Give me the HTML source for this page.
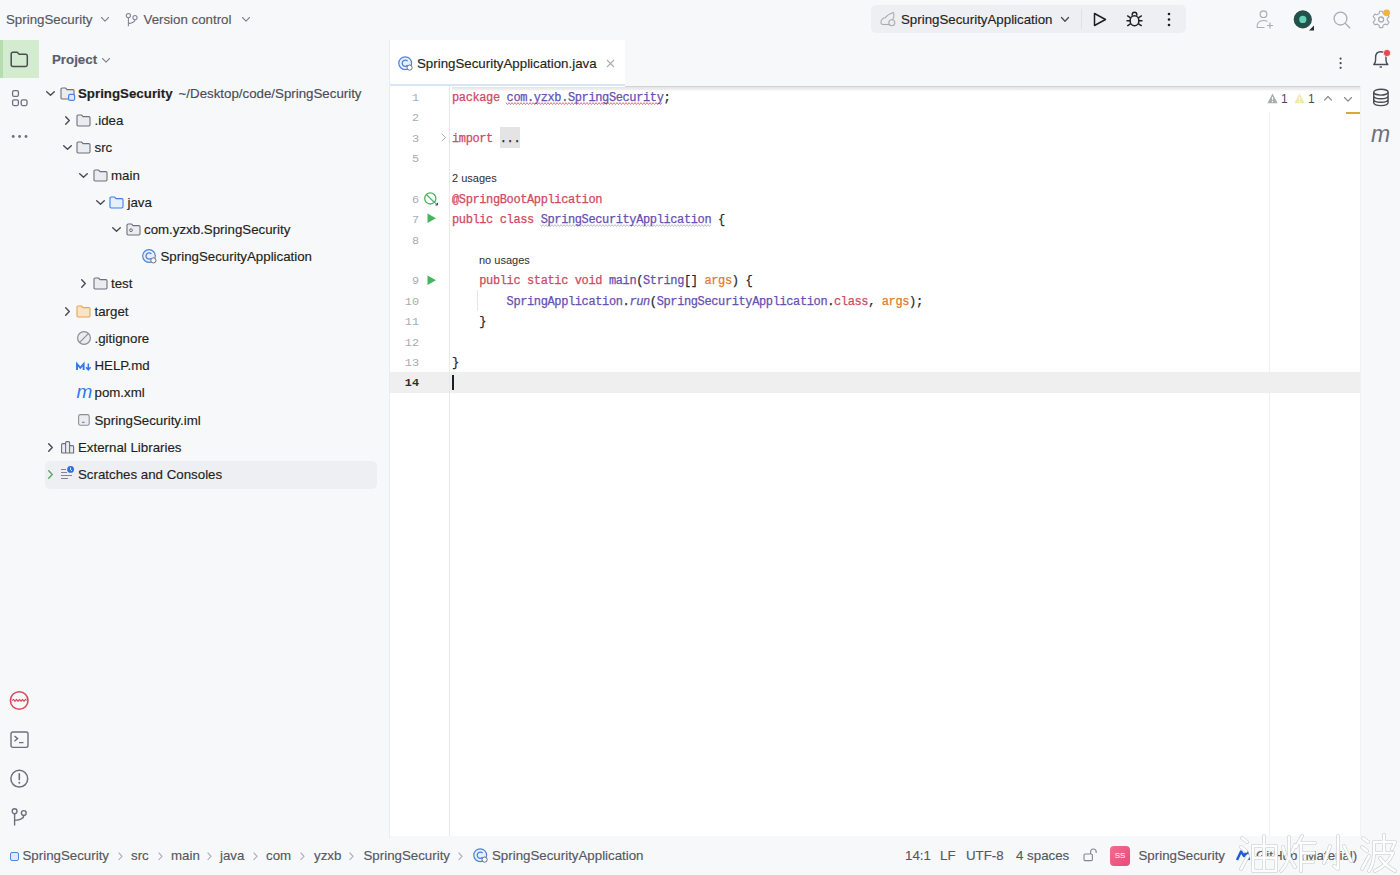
<!DOCTYPE html>
<html><head><meta charset="utf-8">
<style>
*{margin:0;padding:0;box-sizing:border-box}
html,body{width:1400px;height:875px;overflow:hidden;background:#F7F8FA;font-family:"Liberation Sans",sans-serif;color:#1E1F22}
.a{position:absolute}
.t{position:absolute;white-space:nowrap;font-size:13.3px;line-height:16px;color:#1E1F22;-webkit-text-stroke:0.15px currentColor}
svg{position:absolute;overflow:visible}
.ln{position:absolute;left:390px;width:29px;text-align:right;font-family:"Liberation Mono",monospace;font-size:11.8px;margin-top:-1.5px;color:#A8ABB0;line-height:16px}
.cl{position:absolute;left:452px;font-family:"Liberation Mono",monospace;font-size:12px;letter-spacing:-0.38px;color:#24292E;line-height:16px;white-space:pre;-webkit-text-stroke:0.25px currentColor}
.k{color:#CF4A62}.c{color:#6650B2}.o{color:#E07A2C}
.hint{position:absolute;font-size:11px;color:#2B2D30;line-height:14px;white-space:nowrap}
.sb{position:absolute;top:848px;font-size:13px;line-height:16px;color:#494B57;white-space:nowrap}
</style></head><body>
<div class="a" style="left:390px;top:86px;width:970px;height:750px;background:#fff"></div>
<div class="a" style="left:390px;top:40px;width:235px;height:46px;background:#fff"></div>
<div class="a" style="left:625px;top:86px;width:735px;height:1px;background:#D2D3D6"></div>
<div class="a" style="left:390px;top:84px;width:235px;height:2px;background:#D6E6F7"></div>
<div class="a" style="left:389px;top:40px;width:1px;height:798px;background:#EBECF0"></div>
<div class="a" style="left:1360px;top:86px;width:1px;height:750px;background:#F0F1F3"></div>
<div class="a" style="left:390px;top:372px;width:970px;height:21px;background:#EFEFEF"></div>
<div class="a" style="left:449px;top:86px;width:1px;height:750px;background:#E8E9EB"></div>
<div class="a" style="left:1269px;top:112px;width:1px;height:724px;background:#EEEFF1"></div>
<div class="a" style="left:452px;top:87px;width:908px;height:4px;background:linear-gradient(#E4E4E4,#F0F0F0 65%,#FFFFFF)"></div>
<svg style="left:506px;top:102.3px" width="159" height="4"><polyline points="0.00 0.6 1.50 2.6 3.00 0.6 4.50 2.6 6.00 0.6 7.50 2.6 9.00 0.6 10.50 2.6 12.00 0.6 13.50 2.6 15.00 0.6 16.50 2.6 18.00 0.6 19.50 2.6 21.00 0.6 22.50 2.6 24.00 0.6 25.50 2.6 27.00 0.6 28.50 2.6 30.00 0.6 31.50 2.6 33.00 0.6 34.50 2.6 36.00 0.6 37.50 2.6 39.00 0.6 40.50 2.6 42.00 0.6 43.50 2.6 45.00 0.6 46.50 2.6 48.00 0.6 49.50 2.6 51.00 0.6 52.50 2.6 54.00 0.6 55.50 2.6 57.00 0.6 58.50 2.6 60.00 0.6 61.50 2.6 63.00 0.6 64.50 2.6 66.00 0.6 67.50 2.6 69.00 0.6 70.50 2.6 72.00 0.6 73.50 2.6 75.00 0.6 76.50 2.6 78.00 0.6 79.50 2.6 81.00 0.6 82.50 2.6 84.00 0.6 85.50 2.6 87.00 0.6 88.50 2.6 90.00 0.6 91.50 2.6 93.00 0.6 94.50 2.6 96.00 0.6 97.50 2.6 99.00 0.6 100.50 2.6 102.00 0.6 103.50 2.6 105.00 0.6 106.50 2.6 108.00 0.6 109.50 2.6 111.00 0.6 112.50 2.6 114.00 0.6 115.50 2.6 117.00 0.6 118.50 2.6 120.00 0.6 121.50 2.6 123.00 0.6 124.50 2.6 126.00 0.6 127.50 2.6 129.00 0.6 130.50 2.6 132.00 0.6 133.50 2.6 135.00 0.6 136.50 2.6 138.00 0.6 139.50 2.6 141.00 0.6 142.50 2.6 144.00 0.6 145.50 2.6 147.00 0.6 148.50 2.6 150.00 0.6 151.50 2.6 153.00 0.6 154.50 2.6 156.00 0.6" fill="none" stroke="#D36A76" stroke-width="0.9"/></svg>
<svg style="left:540px;top:224.2px" width="173" height="4"><polyline points="0.00 0.6 1.50 2.6 3.00 0.6 4.50 2.6 6.00 0.6 7.50 2.6 9.00 0.6 10.50 2.6 12.00 0.6 13.50 2.6 15.00 0.6 16.50 2.6 18.00 0.6 19.50 2.6 21.00 0.6 22.50 2.6 24.00 0.6 25.50 2.6 27.00 0.6 28.50 2.6 30.00 0.6 31.50 2.6 33.00 0.6 34.50 2.6 36.00 0.6 37.50 2.6 39.00 0.6 40.50 2.6 42.00 0.6 43.50 2.6 45.00 0.6 46.50 2.6 48.00 0.6 49.50 2.6 51.00 0.6 52.50 2.6 54.00 0.6 55.50 2.6 57.00 0.6 58.50 2.6 60.00 0.6 61.50 2.6 63.00 0.6 64.50 2.6 66.00 0.6 67.50 2.6 69.00 0.6 70.50 2.6 72.00 0.6 73.50 2.6 75.00 0.6 76.50 2.6 78.00 0.6 79.50 2.6 81.00 0.6 82.50 2.6 84.00 0.6 85.50 2.6 87.00 0.6 88.50 2.6 90.00 0.6 91.50 2.6 93.00 0.6 94.50 2.6 96.00 0.6 97.50 2.6 99.00 0.6 100.50 2.6 102.00 0.6 103.50 2.6 105.00 0.6 106.50 2.6 108.00 0.6 109.50 2.6 111.00 0.6 112.50 2.6 114.00 0.6 115.50 2.6 117.00 0.6 118.50 2.6 120.00 0.6 121.50 2.6 123.00 0.6 124.50 2.6 126.00 0.6 127.50 2.6 129.00 0.6 130.50 2.6 132.00 0.6 133.50 2.6 135.00 0.6 136.50 2.6 138.00 0.6 139.50 2.6 141.00 0.6 142.50 2.6 144.00 0.6 145.50 2.6 147.00 0.6 148.50 2.6 150.00 0.6 151.50 2.6 153.00 0.6 154.50 2.6 156.00 0.6 157.50 2.6 159.00 0.6 160.50 2.6 162.00 0.6 163.50 2.6 165.00 0.6 166.50 2.6 168.00 0.6 169.50 2.6 171.00 0.6" fill="none" stroke="#B8BABE" stroke-width="0.9"/></svg>
<div class="a" style="left:500px;top:127px;width:20px;height:21px;background:#E4E4E4"></div>
<div class="ln" style="top:91px">1</div>
<div class="ln" style="top:111px">2</div>
<div class="ln" style="top:132px">3</div>
<div class="ln" style="top:152px">5</div>
<div class="ln" style="top:193px">6</div>
<div class="ln" style="top:213px">7</div>
<div class="ln" style="top:234px">8</div>
<div class="ln" style="top:274px">9</div>
<div class="ln" style="top:295px">10</div>
<div class="ln" style="top:315px">11</div>
<div class="ln" style="top:336px">12</div>
<div class="ln" style="top:356px">13</div>
<div class="ln" style="top:376px;color:#2B2D30;font-weight:bold">14</div>
<div class="cl" style="top:90px"><span class="k">package</span> <span class="c">com.yzxb.SpringSecurity</span>;</div>
<div class="cl" style="top:131px"><span class="k">import</span> ...</div>
<div class="hint" style="left:452px;top:171px">2 usages</div>
<div class="cl" style="top:192px"><span class="k">@SpringBootApplication</span></div>
<div class="cl" style="top:212px"><span class="k">public class</span> <span class="c">SpringSecurityApplication</span> {</div>
<div class="hint" style="left:479px;top:253px">no usages</div>
<div class="cl" style="top:273px">    <span class="k">public static void</span> <span class="c">main</span>(<span class="c">String</span>[] <span class="o">args</span>) {</div>
<div class="cl" style="top:294px">        <span class="c">SpringApplication</span>.<i class="c">run</i>(<span class="c">SpringSecurityApplication</span>.<span class="k">class</span>, <span class="o">args</span>);</div>
<div class="cl" style="top:314px">    }</div>
<div class="cl" style="top:355px">}</div>
<div class="a" style="left:452px;top:375px;width:2px;height:15px;background:#1E1F22"></div>
<div class="t" style="left:6px;top:11.5px;color:#55585E">SpringSecurity</div>
<svg style="left:100.7px;top:17px" width="8" height="4.6"><path d="M0.5 0.5 L4.0 4.1 L7.5 0.5" fill="none" stroke="#818594" stroke-width="1.1" stroke-linecap="round" stroke-linejoin="round"/></svg>
<svg style="left:125px;top:13px" width="13" height="14"><circle cx="3.4" cy="2.6" r="2.1" fill="none" stroke="#818594" stroke-width="1.1"/><circle cx="10" cy="4.6" r="2.1" fill="none" stroke="#818594" stroke-width="1.1"/><path d="M3.4 4.7 V13.3 M10 6.7 Q10 9.6 3.4 10.6" fill="none" stroke="#818594" stroke-width="1.1"/></svg>
<div class="t" style="left:143.5px;top:11.6px;color:#55585E">Version control</div>
<svg style="left:242.4px;top:17px" width="8" height="4.6"><path d="M0.5 0.5 L4.0 4.1 L7.5 0.5" fill="none" stroke="#818594" stroke-width="1.1" stroke-linecap="round" stroke-linejoin="round"/></svg>
<div class="a" style="left:871px;top:5px;width:315px;height:28px;background:#EEEFF2;border-radius:5px"></div>
<div class="a" style="left:1081px;top:9px;width:1px;height:20px;background:#DFE1E5"></div>
<svg style="left:880px;top:11px" width="17" height="16"><path d="M3 13.5 Q0.8 13.5 1 11 Q1.3 7.5 5 6.8 Q8 3 13.5 1.5 Q14.8 6 12 9.5" fill="none" stroke="#A8ADB5" stroke-width="1.1"/><path d="M3 13.5 H9" stroke="#A8ADB5" stroke-width="1.1"/><circle cx="11.8" cy="11.8" r="3" fill="#EDEEF1" stroke="#A8ADB5" stroke-width="1.1"/></svg>
<div class="t" style="left:901px;top:11.6px;color:#1E1F22">SpringSecurityApplication</div>
<svg style="left:1060.5px;top:17px" width="8" height="4.8"><path d="M0.5 0.5 L4.0 4.3 L7.5 0.5" fill="none" stroke="#494B57" stroke-width="1.3" stroke-linecap="round" stroke-linejoin="round"/></svg>
<svg style="left:1093px;top:12px" width="14" height="15"><path d="M1.5 1.5 L12.5 7.5 L1.5 13.5 Z" fill="none" stroke="#1E1F22" stroke-width="1.5" stroke-linejoin="round"/></svg>
<svg style="left:1126px;top:11px" width="17" height="17"><path d="M6.2 4.8 V3.6 Q6.2 1.2 8.5 1.2 Q10.8 1.2 10.8 3.6 V4.8" fill="none" stroke="#1E1F22" stroke-width="1.4"/><ellipse cx="8.5" cy="9.8" rx="4.4" ry="5" fill="none" stroke="#1E1F22" stroke-width="1.5"/><path d="M4.3 6.6 L1.6 4.9 M4 9.8 H1 M4.4 12.9 L1.7 14.6 M12.7 6.6 L15.4 4.9 M13 9.8 H16 M12.6 12.9 L15.3 14.6" fill="none" stroke="#1E1F22" stroke-width="1.4" stroke-linecap="round"/></svg>
<svg style="left:1167px;top:12px" width="4" height="15"><circle cx="2" cy="2" r="1.3" fill="#1E1F22"/><circle cx="2" cy="7.5" r="1.3" fill="#1E1F22"/><circle cx="2" cy="13" r="1.3" fill="#1E1F22"/></svg>
<svg style="left:1256px;top:10px" width="19" height="19"><circle cx="7.5" cy="4.2" r="3.3" fill="none" stroke="#A8ADB5" stroke-width="1.2"/><path d="M1 17.5 Q1 10.5 7.5 10.5 Q10 10.5 11.5 11.6 M1 17.5 H8.5 M14 12.5 V18.5 M11 15.5 H17" fill="none" stroke="#A8ADB5" stroke-width="1.2"/></svg>
<svg style="left:1293px;top:10px" width="22" height="22"><circle cx="9.8" cy="9.4" r="9.1" fill="#23504A"/><circle cx="9.8" cy="9.4" r="3.6" fill="#63D1B3"/><path d="M21 15.5 V20.5 H16 Z" fill="#2B2D30"/></svg>
<svg style="left:1333px;top:11px" width="19" height="19"><circle cx="7.5" cy="7.6" r="6.4" fill="none" stroke="#A8ADB5" stroke-width="1.3"/><path d="M12.2 12.3 L17.2 17.2" stroke="#A8ADB5" stroke-width="1.3"/></svg>
<svg style="left:1371px;top:10px" width="20" height="20"><path d="M8.2 1.5 H11.8 L12.4 4.2 L14.8 5.6 L17.4 4.8 L19.2 7.9 L17.2 9.8 V12.2 L19.2 14.1 L17.4 17.2 L14.8 16.4 L12.4 17.8 L11.8 20.5 H8.2 L7.6 17.8 L5.2 16.4 L2.6 17.2 L0.8 14.1 L2.8 12.2 V9.8 L0.8 7.9 L2.6 4.8 L5.2 5.6 L7.6 4.2 Z" transform="translate(1.5 0) scale(0.86)" fill="none" stroke="#A8ADB5" stroke-width="1.3" stroke-linejoin="round"/><circle cx="10.1" cy="9.5" r="2.5" fill="none" stroke="#A8ADB5" stroke-width="1.3"/><circle cx="15.6" cy="2.8" r="3.4" fill="#F2B53C"/></svg>
<div class="a" style="left:0;top:40px;width:39px;height:38px;background:#D3EBCF"></div>
<div class="a" style="left:0;top:40px;width:3px;height:38px;background:#B5DDAE"></div>
<svg style="left:10px;top:51px" width="19" height="17"><path d="M1.2 3 Q1.2 1.3 2.9 1.3 H7.2 L9.2 3.3 H15.6 Q17.3 3.3 17.3 5 V13.8 Q17.3 15.5 15.6 15.5 H2.9 Q1.2 15.5 1.2 13.8 Z" fill="none" stroke="#494B57" stroke-width="1.5" stroke-linejoin="round"/></svg>
<svg style="left:11px;top:89px" width="18" height="18"><rect x="1.6" y="1.6" width="5.8" height="5.8" rx="1.5" fill="none" stroke="#6C707E" stroke-width="1.3"/><rect x="1.6" y="10.8" width="5.8" height="5.8" rx="1.5" fill="none" stroke="#6C707E" stroke-width="1.3"/><rect x="10.2" y="10.8" width="5.8" height="5.8" rx="1.5" fill="none" stroke="#6C707E" stroke-width="1.3"/></svg>
<svg style="left:11px;top:134px" width="18" height="5"><circle cx="2.2" cy="2.5" r="1.4" fill="#6C707E"/><circle cx="8.6" cy="2.5" r="1.4" fill="#6C707E"/><circle cx="15" cy="2.5" r="1.4" fill="#6C707E"/></svg>
<svg style="left:9px;top:690px" width="21" height="21"><circle cx="10.2" cy="10.5" r="8.8" fill="none" stroke="#D9485A" stroke-width="1.6"/><path d="M3 10.6 L4.5 9.4 L6 11.4 L7.5 9.4 L9 11.4 L10.5 9.4 L12 11.4 L13.5 9.4 L15 11.4 L16.5 9.4 L17.6 10.4" fill="none" stroke="#D9485A" stroke-width="1.1" stroke-linejoin="round"/></svg>
<svg style="left:10px;top:731px" width="19" height="17"><rect x="1" y="1" width="17" height="15.4" rx="1.8" fill="none" stroke="#6C707E" stroke-width="1.4"/><path d="M4.5 5 L7.6 7.6 L4.5 10.2 M9 11.6 H13.5" fill="none" stroke="#6C707E" stroke-width="1.4"/></svg>
<svg style="left:10px;top:769px" width="19" height="19"><circle cx="9.3" cy="9.7" r="8.4" fill="none" stroke="#6C707E" stroke-width="1.5"/><path d="M9.3 4.8 V10.6" stroke="#6C707E" stroke-width="1.6" stroke-linecap="round"/><circle cx="9.3" cy="13.8" r="1" fill="#6C707E"/></svg>
<svg style="left:11px;top:808px" width="17" height="19"><circle cx="3.6" cy="3.2" r="2.4" fill="none" stroke="#6C707E" stroke-width="1.4"/><circle cx="12.8" cy="5" r="2.4" fill="none" stroke="#6C707E" stroke-width="1.4"/><path d="M3.6 5.6 V17.5 M12.8 7.4 Q12.8 11.6 3.6 12.4" fill="none" stroke="#6C707E" stroke-width="1.4"/></svg>
<div class="t" style="left:52px;top:52px;font-weight:bold;color:#5A5D6B">Project</div>
<svg style="left:102px;top:58px" width="8" height="4.6"><path d="M0.5 0.5 L4.0 4.1 L7.5 0.5" fill="none" stroke="#818594" stroke-width="1.1" stroke-linecap="round" stroke-linejoin="round"/></svg>
<svg style="left:1371px;top:48px" width="22" height="22"><path d="M2.8 16.5 Q4.6 15 4.6 12 V9.5 Q4.6 3.8 9.8 3.8 Q15 3.8 15 9.5 V12 Q15 15 16.8 16.5 Z" fill="none" stroke="#494B57" stroke-width="1.4" stroke-linejoin="round"/><path d="M8.6 19 H11" stroke="#494B57" stroke-width="1.4"/><circle cx="16" cy="5" r="3.6" fill="#E5484D" stroke="#F7F8FA" stroke-width="0.8"/></svg>
<svg style="left:1372px;top:88px" width="18" height="20"><ellipse cx="8.9" cy="4.2" rx="7.2" ry="2.9" fill="none" stroke="#494B57" stroke-width="1.4"/><path d="M1.7 4.2 V14.6 Q1.7 17.6 8.9 17.6 Q16.1 17.6 16.1 14.6 V4.2 M1.7 7.8 Q1.7 10.8 8.9 10.8 Q16.1 10.8 16.1 7.8 M1.7 11.2 Q1.7 14.2 8.9 14.2 Q16.1 14.2 16.1 11.2" fill="none" stroke="#494B57" stroke-width="1.4"/></svg>
<div class="a" style="left:1371px;top:123px;font:italic 23px/22px 'Liberation Sans',sans-serif;color:#6C707E;letter-spacing:-1px">m</div>
<svg style="left:398px;top:56px" width="16" height="16"><circle cx="7.2" cy="7.2" r="6.4" fill="#E7F0FD" stroke="#4F84DC" stroke-width="1.2"/><path d="M9.6 5.1 A3.1 3.1 0 1 0 9.6 9.3" fill="none" stroke="#4F84DC" stroke-width="1.3"/><circle cx="11.6" cy="11.6" r="2.6" fill="#fff" stroke="#6C707E" stroke-width="1"/></svg>
<div class="t" style="left:417px;top:55.5px;color:#1E1F22">SpringSecurityApplication.java</div>
<svg style="left:606px;top:59px" width="9" height="9"><path d="M1 1 L8 8 M8 1 L1 8" stroke="#A8ADB5" stroke-width="1.1"/></svg>
<svg style="left:1339px;top:57px" width="4" height="13"><circle cx="1.6" cy="1.6" r="1.1" fill="#494B57"/><circle cx="1.6" cy="6.2" r="1.1" fill="#494B57"/><circle cx="1.6" cy="10.8" r="1.1" fill="#494B57"/></svg>
<svg style="left:1267px;top:93px" width="11" height="11"><path d="M5.5 0.5 L10.6 10.3 H0.4 Z" fill="#A8ABB0"/><path d="M5.5 3.8 V6.8" stroke="#fff" stroke-width="1.2"/><circle cx="5.5" cy="8.5" r="0.7" fill="#fff"/></svg>
<div class="a" style="left:1281px;top:92px;font:12px/14px 'Liberation Sans',sans-serif;color:#494B57">1</div>
<svg style="left:1294px;top:93px" width="11" height="11"><path d="M5.5 0.5 L10.6 10.3 H0.4 Z" fill="#F1E9A9"/><path d="M5.5 3.8 V6.8" stroke="#fff" stroke-width="1.2"/><circle cx="5.5" cy="8.5" r="0.7" fill="#fff"/></svg>
<div class="a" style="left:1308px;top:92px;font:12px/14px 'Liberation Sans',sans-serif;color:#494B57">1</div>
<svg style="left:1324px;top:96px" width="8" height="4.6"><path d="M0.5 4.1 L4.0 0.5 L7.5 4.1" fill="none" stroke="#818594" stroke-width="1.1" stroke-linecap="round" stroke-linejoin="round"/></svg>
<svg style="left:1344px;top:97px" width="8" height="4.6"><path d="M0.5 0.5 L4.0 4.1 L7.5 0.5" fill="none" stroke="#818594" stroke-width="1.1" stroke-linecap="round" stroke-linejoin="round"/></svg>
<div class="a" style="left:1346px;top:112px;width:14px;height:2px;background:#D8A933"></div>
<svg style="left:441px;top:133px" width="6" height="9"><path d="M0.8 0.8 L4.6 4.5 L0.8 8.2" fill="none" stroke="#A8ADB5" stroke-width="1"/></svg>
<svg style="left:424px;top:192px" width="15" height="15"><circle cx="6.3" cy="6.4" r="5.6" fill="none" stroke="#4CAF62" stroke-width="1.3"/><path d="M2.5 2.6 L10.2 10.3" stroke="#4CAF62" stroke-width="1.3"/><path d="M11 10.5 L13.5 13 M13.5 10.8 V13 H11.3" fill="none" stroke="#4A4A4A" stroke-width="1"/></svg>
<svg style="left:427px;top:213px" width="10" height="11"><path d="M0.5 0.5 L9 5.3 L0.5 10.1 Z" fill="#45B55F"/></svg>
<svg style="left:427px;top:275px" width="10" height="11"><path d="M0.5 0.5 L9 5.3 L0.5 10.1 Z" fill="#45B55F"/></svg>
<div class="a" style="left:477px;top:290px;width:1px;height:21px;background:#E4E5E8"></div>
<div class="a" style="left:10px;top:852px;width:9px;height:9px;border:1.5px solid #4B86E0;border-radius:2px;background:#DCEBFF"></div>
<div class="t" style="left:22.5px;top:848px;color:#55585E">SpringSecurity</div>
<div class="t" style="left:131px;top:848px;color:#55585E">src</div>
<div class="t" style="left:171px;top:848px;color:#55585E">main</div>
<div class="t" style="left:220px;top:848px;color:#55585E">java</div>
<div class="t" style="left:266px;top:848px;color:#55585E">com</div>
<div class="t" style="left:314px;top:848px;color:#55585E">yzxb</div>
<div class="t" style="left:363.5px;top:848px;color:#55585E">SpringSecurity</div>
<svg style="left:118px;top:852px" width="5" height="9"><path d="M0.6 0.6 L4 4.3 L0.6 8" fill="none" stroke="#A8ADB5" stroke-width="1.1"/></svg>
<svg style="left:158px;top:852px" width="5" height="9"><path d="M0.6 0.6 L4 4.3 L0.6 8" fill="none" stroke="#A8ADB5" stroke-width="1.1"/></svg>
<svg style="left:207px;top:852px" width="5" height="9"><path d="M0.6 0.6 L4 4.3 L0.6 8" fill="none" stroke="#A8ADB5" stroke-width="1.1"/></svg>
<svg style="left:253px;top:852px" width="5" height="9"><path d="M0.6 0.6 L4 4.3 L0.6 8" fill="none" stroke="#A8ADB5" stroke-width="1.1"/></svg>
<svg style="left:300px;top:852px" width="5" height="9"><path d="M0.6 0.6 L4 4.3 L0.6 8" fill="none" stroke="#A8ADB5" stroke-width="1.1"/></svg>
<svg style="left:349px;top:852px" width="5" height="9"><path d="M0.6 0.6 L4 4.3 L0.6 8" fill="none" stroke="#A8ADB5" stroke-width="1.1"/></svg>
<svg style="left:458px;top:852px" width="5" height="9"><path d="M0.6 0.6 L4 4.3 L0.6 8" fill="none" stroke="#A8ADB5" stroke-width="1.1"/></svg>
<svg style="left:473px;top:848px" width="16" height="16"><circle cx="7.2" cy="7.2" r="6.4" fill="#E7F0FD" stroke="#4F84DC" stroke-width="1.2"/><path d="M9.6 5.1 A3.1 3.1 0 1 0 9.6 9.3" fill="none" stroke="#4F84DC" stroke-width="1.3"/><circle cx="11.6" cy="11.6" r="2.6" fill="#F7F8FA" stroke="#6C707E" stroke-width="1"/></svg>
<div class="t" style="left:492px;top:848px;color:#55585E">SpringSecurityApplication</div>
<div class="t" style="left:905px;top:848px;color:#55585E">14:1</div>
<div class="t" style="left:940px;top:848px;color:#55585E">LF</div>
<div class="t" style="left:966px;top:848px;color:#55585E">UTF-8</div>
<div class="t" style="left:1016px;top:848px;color:#55585E">4 spaces</div>
<div class="t" style="left:1138.5px;top:848px;color:#55585E">SpringSecurity</div>
<svg style="left:1083px;top:848px" width="15" height="14"><rect x="1" y="6" width="8.4" height="6.6" rx="1.2" fill="none" stroke="#818594" stroke-width="1.1"/><path d="M7.6 6 V4 Q7.6 1 10.4 1 Q13.2 1 13.2 4 V5" fill="none" stroke="#818594" stroke-width="1.1"/></svg>
<div class="a" style="left:1110px;top:846px;width:20px;height:20px;border-radius:4px;background:linear-gradient(135deg,#F56C8E,#E8497A);color:#fff;font:8px/20px 'Liberation Sans',sans-serif;text-align:center">SS</div>
<svg style="left:1236px;top:850px" width="14" height="11"><path d="M1 10 L5 1.5 L8 6 L11 1.5 L13 10" fill="none" stroke="#1F5BD6" stroke-width="2.4" stroke-linejoin="round"/></svg>
<div class="t" style="left:1256px;top:848px;color:#55585E">GitHub (Material)</div>
<div class="a" style="left:45px;top:461px;width:332px;height:28px;background:#EEEFF2;border-radius:5px"></div>
<svg style="left:46.0px;top:91px" width="9" height="5"><path d="M0.7 0.7 L4.5 4.3 L8.3 0.7" fill="none" stroke="#494B57" stroke-width="1.4" stroke-linecap="round" stroke-linejoin="round"/></svg>
<svg style="left:59.5px;top:86.5px" width="15" height="13"><path d="M1 2.2 Q1 1 2.2 1 H5.6 L7.1 2.6 H12.8 Q14 2.6 14 3.8 V10.8 Q14 12 12.8 12 H2.2 Q1 12 1 10.8 Z" fill="#EBECF0" stroke="#6C707E" stroke-width="1.1"/><rect x="8.6" y="7.4" width="6" height="6" rx="1.5" fill="#DCEBFF" stroke="#4B86E0" stroke-width="1.2"/></svg>
<div class="t" style="left:78.0px;top:86px"><b>SpringSecurity</b><span style="color:#494B57;margin-left:6px">~/Desktop/code/SpringSecurity</span></div>
<svg style="left:64.5px;top:116px" width="5" height="9"><path d="M0.7 0.7 L4.3 4.5 L0.7 8.3" fill="none" stroke="#494B57" stroke-width="1.4" stroke-linecap="round" stroke-linejoin="round"/></svg>
<svg style="left:76.0px;top:113.5px" width="15" height="13"><path d="M1 2.2 Q1 1 2.2 1 H5.6 L7.1 2.6 H12.8 Q14 2.6 14 3.8 V10.8 Q14 12 12.8 12 H2.2 Q1 12 1 10.8 Z" fill="#EBECF0" stroke="#6C707E" stroke-width="1.1"/></svg>
<div class="t" style="left:94.5px;top:113px">.idea</div>
<svg style="left:62.5px;top:145px" width="9" height="5"><path d="M0.7 0.7 L4.5 4.3 L8.3 0.7" fill="none" stroke="#494B57" stroke-width="1.4" stroke-linecap="round" stroke-linejoin="round"/></svg>
<svg style="left:76.0px;top:140.5px" width="15" height="13"><path d="M1 2.2 Q1 1 2.2 1 H5.6 L7.1 2.6 H12.8 Q14 2.6 14 3.8 V10.8 Q14 12 12.8 12 H2.2 Q1 12 1 10.8 Z" fill="#EBECF0" stroke="#6C707E" stroke-width="1.1"/></svg>
<div class="t" style="left:94.5px;top:140px">src</div>
<svg style="left:79.0px;top:173px" width="9" height="5"><path d="M0.7 0.7 L4.5 4.3 L8.3 0.7" fill="none" stroke="#494B57" stroke-width="1.4" stroke-linecap="round" stroke-linejoin="round"/></svg>
<svg style="left:92.5px;top:168.5px" width="15" height="13"><path d="M1 2.2 Q1 1 2.2 1 H5.6 L7.1 2.6 H12.8 Q14 2.6 14 3.8 V10.8 Q14 12 12.8 12 H2.2 Q1 12 1 10.8 Z" fill="#EBECF0" stroke="#6C707E" stroke-width="1.1"/></svg>
<div class="t" style="left:111.0px;top:168px">main</div>
<svg style="left:95.5px;top:200px" width="9" height="5"><path d="M0.7 0.7 L4.5 4.3 L8.3 0.7" fill="none" stroke="#494B57" stroke-width="1.4" stroke-linecap="round" stroke-linejoin="round"/></svg>
<svg style="left:109.0px;top:195.5px" width="15" height="13"><path d="M1 2.2 Q1 1 2.2 1 H5.6 L7.1 2.6 H12.8 Q14 2.6 14 3.8 V10.8 Q14 12 12.8 12 H2.2 Q1 12 1 10.8 Z" fill="#E6EFFC" stroke="#3D7FE6" stroke-width="1.1"/></svg>
<div class="t" style="left:127.5px;top:195px">java</div>
<svg style="left:112.0px;top:227px" width="9" height="5"><path d="M0.7 0.7 L4.5 4.3 L8.3 0.7" fill="none" stroke="#494B57" stroke-width="1.4" stroke-linecap="round" stroke-linejoin="round"/></svg>
<svg style="left:125.5px;top:222.5px" width="15" height="13"><path d="M1 2.2 Q1 1 2.2 1 H5.6 L7.1 2.6 H12.8 Q14 2.6 14 3.8 V10.8 Q14 12 12.8 12 H2.2 Q1 12 1 10.8 Z" fill="#EBECF0" stroke="#6C707E" stroke-width="1.1"/><circle cx="5" cy="7.2" r="1.4" fill="none" stroke="#6C707E" stroke-width="1"/></svg>
<div class="t" style="left:144.0px;top:222px">com.yzxb.SpringSecurity</div>
<svg style="left:142.0px;top:249px" width="15" height="15"><circle cx="7" cy="7" r="6.3" fill="#E7F0FD" stroke="#4F84DC" stroke-width="1.2"/><path d="M9.4 4.9 A3.1 3.1 0 1 0 9.4 9.1" fill="none" stroke="#4F84DC" stroke-width="1.3"/><circle cx="11.4" cy="11.4" r="2.6" fill="#F7F8FA" stroke="#6C707E" stroke-width="1"/></svg>
<div class="t" style="left:160.5px;top:249px">SpringSecurityApplication</div>
<svg style="left:81.0px;top:279px" width="5" height="9"><path d="M0.7 0.7 L4.3 4.5 L0.7 8.3" fill="none" stroke="#494B57" stroke-width="1.4" stroke-linecap="round" stroke-linejoin="round"/></svg>
<svg style="left:92.5px;top:276.5px" width="15" height="13"><path d="M1 2.2 Q1 1 2.2 1 H5.6 L7.1 2.6 H12.8 Q14 2.6 14 3.8 V10.8 Q14 12 12.8 12 H2.2 Q1 12 1 10.8 Z" fill="#EBECF0" stroke="#6C707E" stroke-width="1.1"/></svg>
<div class="t" style="left:111.0px;top:276px">test</div>
<svg style="left:64.5px;top:307px" width="5" height="9"><path d="M0.7 0.7 L4.3 4.5 L0.7 8.3" fill="none" stroke="#494B57" stroke-width="1.4" stroke-linecap="round" stroke-linejoin="round"/></svg>
<svg style="left:76.0px;top:304.5px" width="15" height="13"><path d="M1 2.2 Q1 1 2.2 1 H5.6 L7.1 2.6 H12.8 Q14 2.6 14 3.8 V10.8 Q14 12 12.8 12 H2.2 Q1 12 1 10.8 Z" fill="#FCE3C4" stroke="#E8A451" stroke-width="1.1"/></svg>
<div class="t" style="left:94.5px;top:304px">target</div>
<svg style="left:76.5px;top:331px" width="15" height="15"><circle cx="7" cy="7" r="6.4" fill="#EBECF0" stroke="#8C8F96" stroke-width="1.2"/><path d="M11.3 2.7 L2.7 11.3" stroke="#8C8F96" stroke-width="1.2"/></svg>
<div class="t" style="left:94.5px;top:331px">.gitignore</div>
<svg style="left:76.0px;top:362.5px" width="16" height="8"><path d="M1 7 V1 L4.3 4.8 L7.6 1 V7" fill="none" stroke="#3574F0" stroke-width="1.9" stroke-linejoin="miter"/><path d="M12.3 0.6 V6.6 M10 4.3 L12.3 6.8 L14.6 4.3" fill="none" stroke="#3574F0" stroke-width="1.5"/></svg>
<div class="t" style="left:94.5px;top:358px">HELP.md</div>
<div class="a" style="left:76.5px;top:384px;font:italic 19px/16px 'Liberation Sans',sans-serif;color:#3574F0;letter-spacing:-0.5px">m</div>
<div class="t" style="left:94.5px;top:385px">pom.xml</div>
<svg style="left:78.0px;top:414px" width="12" height="12"><rect x="0.6" y="0.6" width="10.6" height="10.6" rx="1.8" fill="#EBECF0" stroke="#8C8F96" stroke-width="1.1"/><path d="M4 8.3 H6.6" stroke="#6C707E" stroke-width="1"/></svg>
<div class="t" style="left:94.5px;top:413px">SpringSecurity.iml</div>
<svg style="left:48.0px;top:443px" width="5" height="9"><path d="M0.7 0.7 L4.3 4.5 L0.7 8.3" fill="none" stroke="#494B57" stroke-width="1.4" stroke-linecap="round" stroke-linejoin="round"/></svg>
<svg style="left:60.5px;top:440.5px" width="14" height="13"><path d="M0.6 12 V3.6 Q0.6 2.6 1.6 2.6 H3.6 Q4.6 2.6 4.6 3.6 V12 M4.6 12 V1.6 Q4.6 0.6 5.6 0.6 H7.6 Q8.6 0.6 8.6 1.6 V12 M8.6 12 V5.6 Q8.6 4.6 9.6 4.6 H11.6 Q12.6 4.6 12.6 5.6 V12 Z M0.6 12 H12.6" fill="#EBECF0" stroke="#6C707E" stroke-width="1.1" stroke-linejoin="round"/></svg>
<div class="t" style="left:78.0px;top:440px">External Libraries</div>
<svg style="left:48.0px;top:470px" width="5" height="9"><path d="M0.7 0.7 L4.3 4.5 L0.7 8.3" fill="none" stroke="#59A869" stroke-width="1.4" stroke-linecap="round" stroke-linejoin="round"/></svg>
<svg style="left:59.7px;top:466.4px" width="15" height="14"><path d="M1 3.5 H6 M1 6.5 H7 M1 9.5 H12 M1 12.5 H8" stroke="#818594" stroke-width="1.2"/><circle cx="10.6" cy="3.4" r="3.4" fill="#2E70D9"/><path d="M10.5 1.6 V3.6 L11.8 4.8" stroke="#fff" stroke-width="0.9" fill="none"/></svg>
<div class="t" style="left:78.0px;top:467px">Scratches and Consoles</div>
<svg style="left:1238px;top:833px" width="160" height="42"><path d="M4 5 L9 9 M3 14 L8 18 M3 36 L10 23 M26 3 V38 M15 13 H38 V38 H15 Z M15 25 H38 M45 14 L47 21 M57 12 L54 19 M51 4 V22 Q49 32 43 38 M51 24 L57 34 M64 3 L58 14 M60 10 H77 M63 10 V38 M63 20 H76 M63 29 H75 M100 3 V36 L96 33 M92 13 L86 30 M106 13 L113 28 M125 5 L130 9 M124 14 L129 18 M124 36 L131 23 M136 9 H157 L154 16 M146 2 V19 M136 9 V22 Q135 32 131 38 M137 20 H155 Q150 32 137 38 M142 25 Q148 33 157 38" fill="none" stroke="#D3D5D8" stroke-width="3.8" stroke-linecap="round" stroke-linejoin="round"/><path d="M4 5 L9 9 M3 14 L8 18 M3 36 L10 23 M26 3 V38 M15 13 H38 V38 H15 Z M15 25 H38 M45 14 L47 21 M57 12 L54 19 M51 4 V22 Q49 32 43 38 M51 24 L57 34 M64 3 L58 14 M60 10 H77 M63 10 V38 M63 20 H76 M63 29 H75 M100 3 V36 L96 33 M92 13 L86 30 M106 13 L113 28 M125 5 L130 9 M124 14 L129 18 M124 36 L131 23 M136 9 H157 L154 16 M146 2 V19 M136 9 V22 Q135 32 131 38 M137 20 H155 Q150 32 137 38 M142 25 Q148 33 157 38" fill="none" stroke="#FFFFFF" stroke-width="2.3" stroke-linecap="round" stroke-linejoin="round"/></svg>
</body></html>
